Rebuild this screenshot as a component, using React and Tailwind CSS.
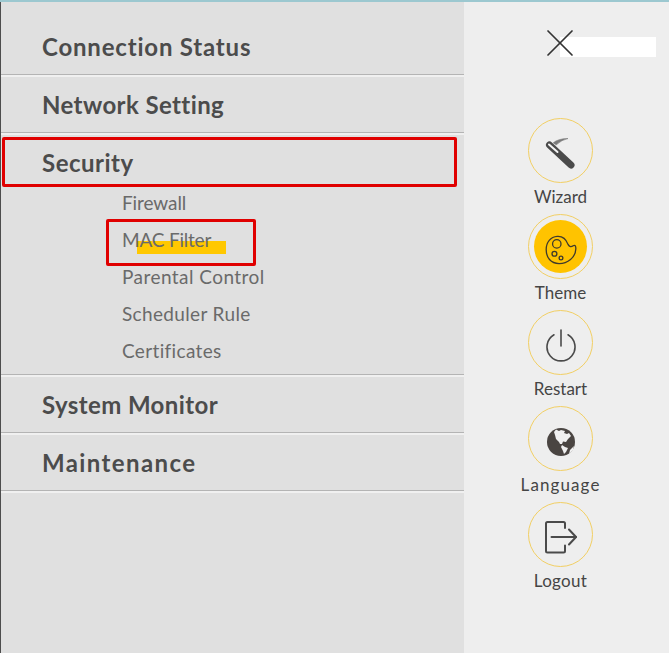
import { X } from 'lucide-react';

const font = "font-['Lato','Liberation_Sans',sans-serif]";

const WizardIcon = () => (
  <svg width="31" height="33" viewBox="0 0 31 33" fill="none" strokeLinecap="round">
    <path d="M4.5 8 L26 28" stroke="#4a4a4a" strokeWidth="7" />
    <path d="M4 7.5 L12.5 15" stroke="#f4f4f4" strokeWidth="2" />
    <path d="M8 6 Q13 1.5 23 1.5 Q17 2.5 11 8" fill="#7a7a7a" stroke="#7a7a7a" strokeWidth="0.6" />
  </svg>
);

const PaletteIcon = () => (
  <svg width="32" height="30" viewBox="0 0 34 32" fill="none" stroke="#3f3a2c" strokeWidth="1.4">
    <path d="M13 1.5 C20 1 23 6 24.5 10 C26 13 28 13 30 11.5 C32 10 33 12 32.8 15 C32.5 24 24 30.5 15 30.5 C6 30.5 1.2 24 1.2 15.5 C1.2 7.5 6 2 13 1.5 Z" />
    <circle cx="12.5" cy="9.5" r="4.5" />
    <circle cx="10" cy="20" r="2.6" />
    <circle cx="17" cy="24.5" r="2" />
  </svg>
);

const PowerIcon = () => (
  <svg width="30" height="33" viewBox="0 0 30 33" fill="none" stroke="#4a4a4a" strokeWidth="1.6" strokeLinecap="round">
    <path d="M15 1 V17" />
    <path d="M8 5.8 A14 14 0 1 0 22 5.8" />
  </svg>
);

const GlobeIcon = () => (
  <svg width="30" height="30" viewBox="0 0 30 30">
    <circle cx="15" cy="15" r="14" fill="#4a4542" />
    <path d="M10 2.5 L13 4 L15 3 L19 4 L18 6 L21 7 L23 6 L25 9 L22 12 L20 15 L17 14.5 L16 17 L14 17 L13 15 L10 12 L9 8 L8 5 Z" fill="#f0f0f0" />
    <path d="M16 18 L19 20 L22 21 L20 25 L18 27 L17 24 L15 20 Z" fill="#f0f0f0" />
    <path d="M24 23 L28 19 L27 23 L23 27 Z" fill="#f0f0f0" />
  </svg>
);

const LogoutIcon = () => (
  <svg width="32" height="33" viewBox="0 0 32 33" fill="none" stroke="#4a4a4a" strokeWidth="2" strokeLinecap="round" strokeLinejoin="round">
    <path d="M20 7 V2.5 Q20 1 18.5 1 H2.5 Q1 1 1 2.5 V30 Q1 31.5 2.5 31.5 H18.5 Q20 31.5 20 30 V24.5" />
    <path d="M6.5 16 H31" />
    <path d="M24 8.5 L31 16 L24 23.5" />
  </svg>
);

const menu = [
  { label: 'Connection Status', track: 'tracking-[0.8px]' },
  { label: 'Network Setting', track: 'tracking-[0.4px]' },
  {
    label: 'Security',
    track: 'tracking-[0.5px]',
    subs: [
      { label: 'Firewall', track: 'tracking-[-0.1px]' },
      { label: 'MAC Filter', track: 'tracking-[-0.2px]' },
      { label: 'Parental Control', track: 'tracking-[0.45px]' },
      { label: 'Scheduler Rule', track: 'tracking-[0.35px]' },
      { label: 'Certificates', track: 'tracking-[0.35px]' },
    ],
  },
  { label: 'System Monitor', track: 'tracking-[0.4px]' },
  { label: 'Maintenance', track: 'tracking-[1.4px]' },
];

const actions = [
  { label: 'Wizard', icon: WizardIcon },
  { label: 'Theme', icon: PaletteIcon, active: true },
  { label: 'Restart', icon: PowerIcon },
  { label: 'Language', icon: GlobeIcon, track: 'tracking-[1.1px]' },
  { label: 'Logout', icon: LogoutIcon, track: 'tracking-[0.3px]' },
];

export default function App() {
  return (
    <div className={`relative flex h-[653px] w-[669px] overflow-hidden border-t-2 border-[#9cc8d0] ${font}`}>
      <div className="w-[464px] shrink-0 border-l border-[#4d4d4d] bg-[#e0e0e0] pt-[17px]">
        {menu.map((item) => (
          <div key={item.label}>
            <div className={`flex items-center pl-[41px] text-[24px] font-bold text-[#4c4c4c] ${item.track} ${item.subs ? 'h-[44px] mt-[6px]' : 'h-[58px] border-b-2 border-b-[#f0f0f0] shadow-[inset_0_-1px_0_#b4b4b4]'}`}>
              {item.label}
            </div>
            {item.subs && (
              <div className="border-b-2 border-b-[#f0f0f0] pb-[5px] pl-[121px] shadow-[inset_0_-1px_0_#b4b4b4]">
                {item.subs.map((sub) => (
                  <div key={sub.label} className={`relative z-10 flex h-[37px] items-center text-[19px] text-[#6a6a6a] ${sub.track}`}>
                    {sub.label}
                  </div>
                ))}
              </div>
            )}
          </div>
        ))}
      </div>

      <div className="flex flex-1 flex-col items-start bg-[#eeeeee] pl-[64px] pt-[116px]">
        {actions.map(({ label, icon: Icon, active, track }) => (
          <div key={label} className="flex h-[96px] w-[65px] flex-col items-center">
            <div className="flex h-[65px] w-[65px] shrink-0 items-center justify-center rounded-full border border-[#f2cf63]">
              {active ? (
                <div className="flex h-[53px] w-[53px] items-center justify-center rounded-full bg-[#ffc300]">
                  <div className="mt-[6px] flex"><Icon /></div>
                </div>
              ) : (
                <div className="mt-[6px] flex"><Icon /></div>
              )}
            </div>
            <div className={`mt-[3px] whitespace-nowrap text-[17px] leading-[22px] text-[#454545] ${track ?? ''}`}>{label}</div>
          </div>
        ))}
      </div>

      {/* close button and the white blot next to it */}
      <div className="absolute left-[560px] top-[35px] h-[20px] w-[96px] bg-white" />
      <X className="absolute left-[536px] top-[17px] text-[#333333]" size={48} strokeWidth={0.85} />

      {/* annotations drawn over the screenshot */}
      <div className="absolute left-[137px] top-[239px] h-[13px] w-[89px] bg-[#ffc800]" />
      <div className="absolute left-[2px] top-[135px] h-[50px] w-[455px] rounded-[2px] border-[3px] border-[#e00000]" />
      <div className="absolute left-[106px] top-[217px] h-[47px] w-[150px] rounded-[2px] border-[3px] border-[#e00000]" />
    </div>
  );
}
